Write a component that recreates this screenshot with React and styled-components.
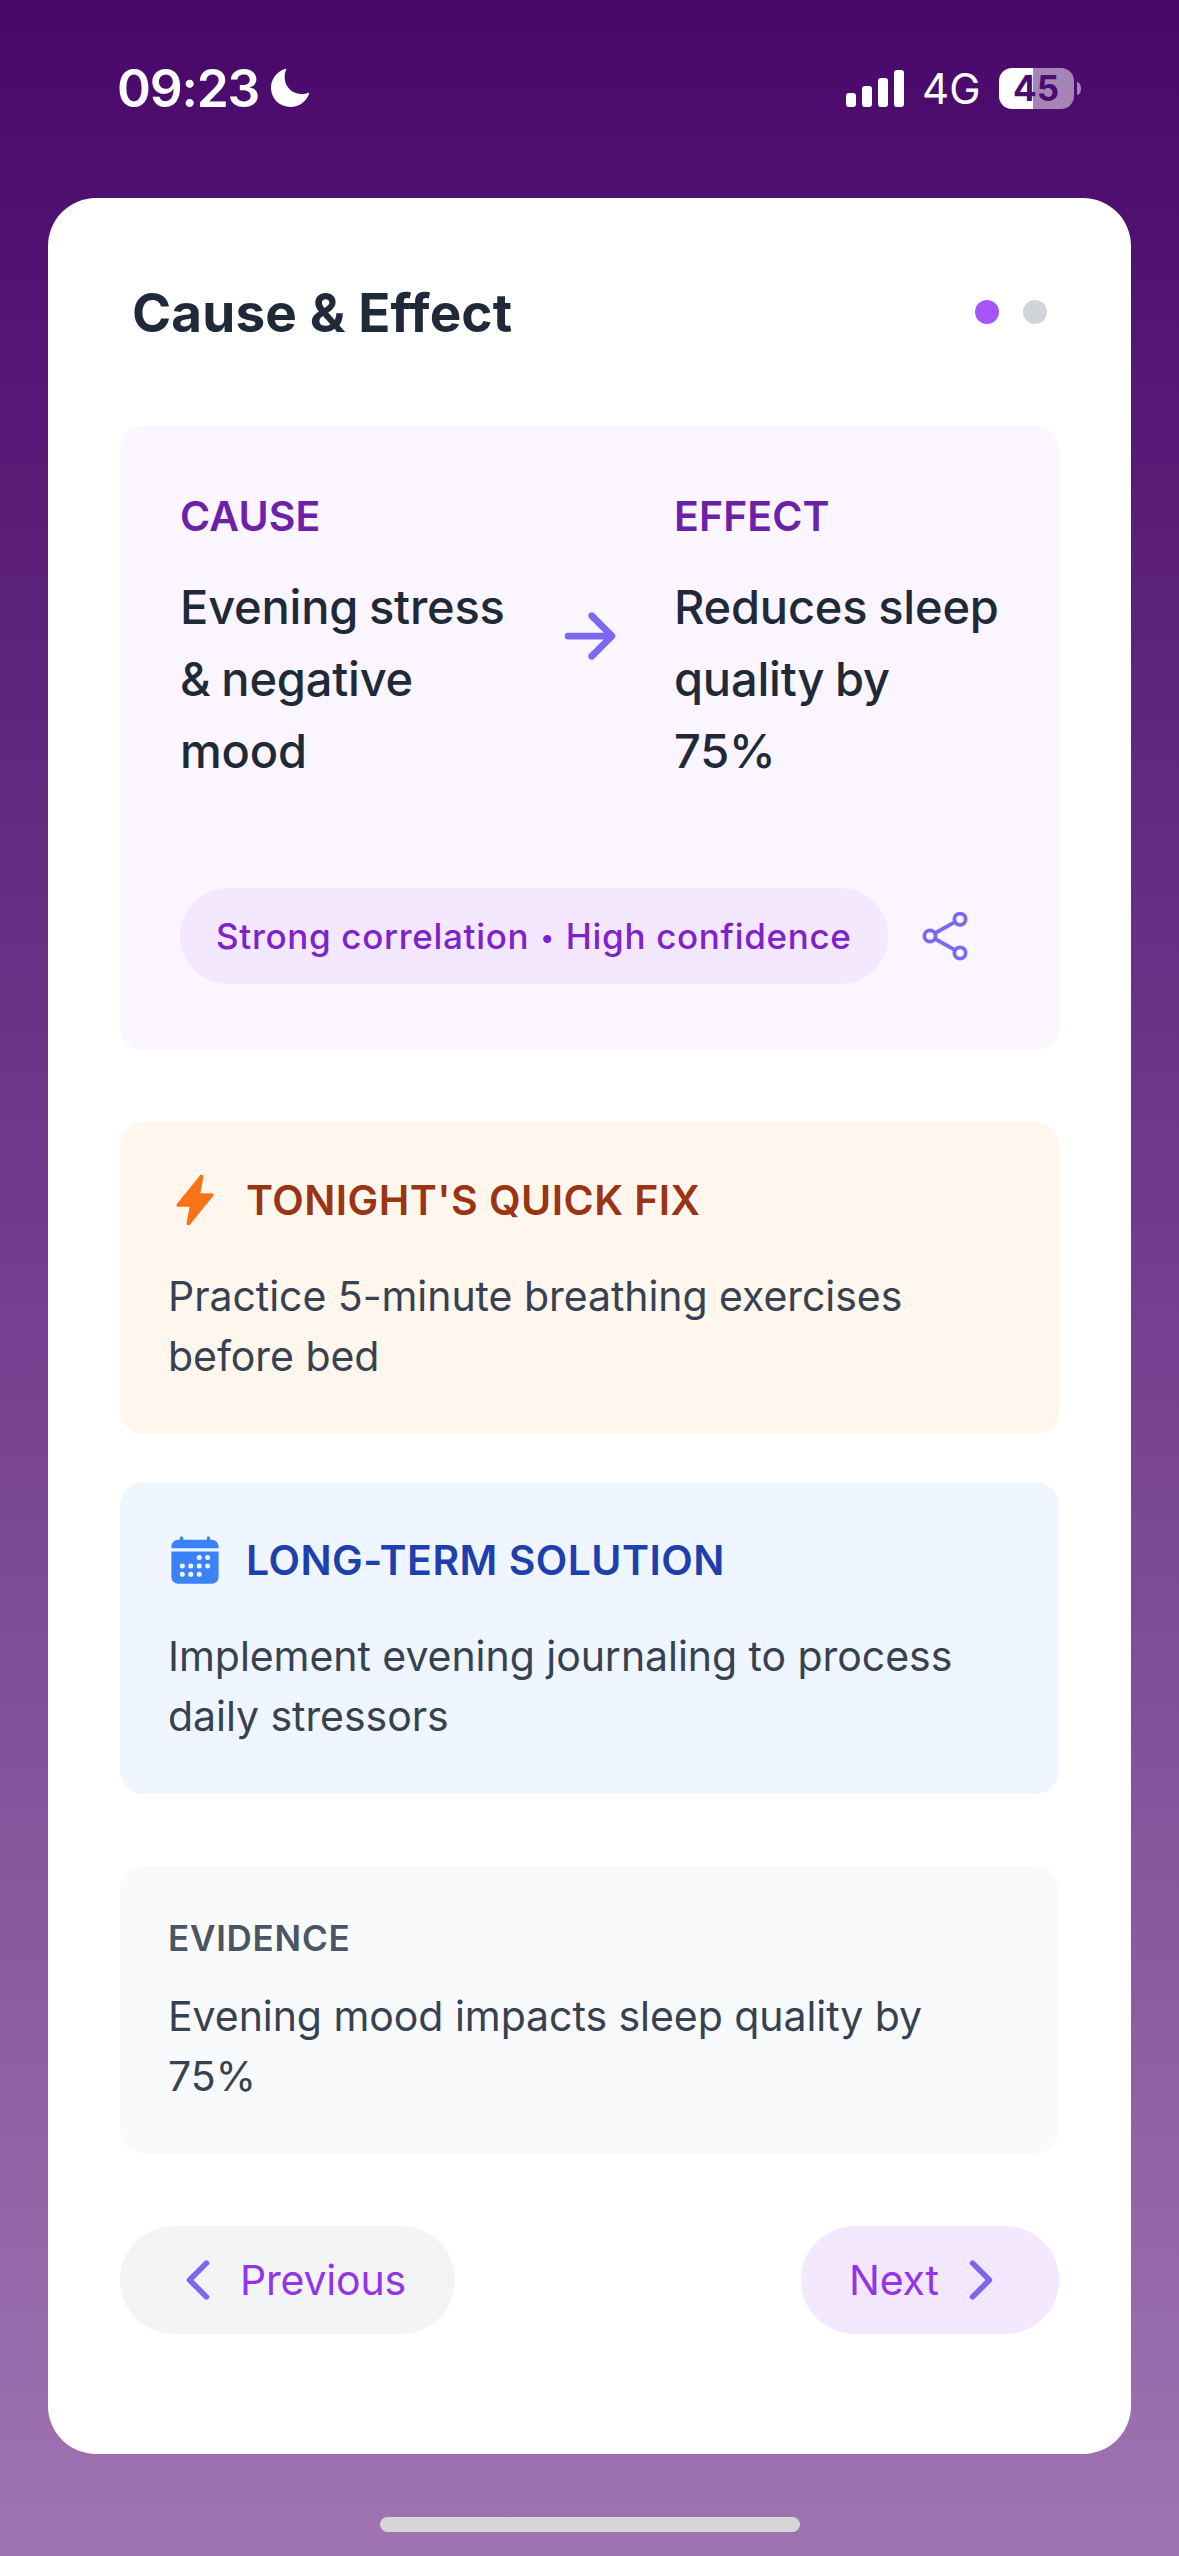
import styled, { createGlobalStyle } from "styled-components";
import {
  IoArrowForward,
  IoCalendar,
  IoChevronBack,
  IoChevronForward,
  IoFlash,
  IoShareSocialOutline,
} from "react-icons/io5";

const tips = [
  {
    title: "TONIGHT'S QUICK FIX",
    text: "Practice 5-minute breathing exercises\nbefore bed",
    icon: IoFlash,
    background: "#fff7ed",
    color: "#9a3412",
    iconColor: "#f97316",
  },
  {
    title: "LONG-TERM SOLUTION",
    text: "Implement evening journaling to process\ndaily stressors",
    icon: IoCalendar,
    background: "#eff6ff",
    color: "#1e40af",
    iconColor: "#3b82f6",
  },
];

function StatusBar() {
  return (
    <Status>
      <Clock>
        <Time>09:23</Time>
        <svg width="40" height="40" viewBox="0 0 40 40">
          <path
            d="M15.2 0.8C16 0.4 16.6 0.9 16.2 1.8C14.8 5 14.4 8 14.8 11.2C15.8 19.4 22 25.4 30.4 25.9C33.4 26.1 35.8 25.7 37.8 24.9C38.8 24.5 39.5 25.1 39.1 26.1C36 34 29 39 20.6 39C9.4 39 1 30.6 1 19.8C1 11 6.8 3.8 15.2 0.8Z"
            fill="#fff"
          />
        </svg>
      </Clock>
      <Signals>
        <Bars>
          <Bar $height={14} />
          <Bar $height={21} />
          <Bar $height={29} />
          <Bar $height={37} />
        </Bars>
        <Network>4G</Network>
        <Battery>45</Battery>
        <BatteryCap />
      </Signals>
    </Status>
  );
}

function App() {
  return (
    <Screen>
      <GlobalStyle />
      <StatusBar />
      <Card>
        <Header>
          <Title>Cause &amp; Effect</Title>
          <Dots>
            <Dot $active />
            <Dot />
          </Dots>
        </Header>

        <Insight>
          <Relation>
            <Column>
              <Label>CAUSE</Label>
              <Statement>{"Evening stress\n& negative\nmood"}</Statement>
            </Column>
            <ArrowBox>
              <IoArrowForward size={72} />
            </ArrowBox>
            <Column>
              <Label>EFFECT</Label>
              <Statement>{"Reduces sleep\nquality by\n75%"}</Statement>
            </Column>
          </Relation>
          <InsightFooter>
            <Pill>
              Strong correlation <Bullet>•</Bullet> High confidence
            </Pill>
            <ShareButton>
              <IoShareSocialOutline size={60} />
            </ShareButton>
          </InsightFooter>
        </Insight>

        <Tips>
          {tips.map((tip) => (
            <Tip key={tip.title} $background={tip.background}>
              <TipHeader $color={tip.iconColor}>
                <tip.icon size={54} />
                <TipTitle $color={tip.color}>{tip.title}</TipTitle>
              </TipHeader>
              <BodyText>{tip.text}</BodyText>
            </Tip>
          ))}
        </Tips>

        <Evidence>
          <EvidenceLabel>EVIDENCE</EvidenceLabel>
          <BodyText>{"Evening mood impacts sleep quality by\n75%"}</BodyText>
        </Evidence>

        <Navigation>
          <NavButton $width={335} $background="#f3f4f6">
            <IoChevronBack size={60} />
            <NavText>Previous</NavText>
          </NavButton>
          <NavButton $width={258} $background="#f3e8ff">
            <NavText>Next</NavText>
            <IoChevronForward size={60} />
          </NavButton>
        </Navigation>
      </Card>
      <HomeIndicator />
    </Screen>
  );
}

export default App;

const GlobalStyle = createGlobalStyle`
  * {
    box-sizing: border-box;
  }

  body {
    margin: 0;
    font-family: Inter, "Liberation Sans", sans-serif;
  }

  svg {
    display: block;
    flex-shrink: 0;
  }
`;

const Screen = styled.div`
  display: flex;
  flex-direction: column;
  align-items: center;
  width: 1179px;
  height: 2556px;
  overflow: hidden;
  background: linear-gradient(to bottom, #48086a, #9f74b1);
`;

const Status = styled.header`
  display: flex;
  justify-content: space-between;
  align-items: center;
  width: 100%;
  height: 198px;
  padding: 0 98px 22px 117px;
  color: white;
`;

const Clock = styled.div`
  display: flex;
  align-items: center;
`;

const Time = styled.span`
  width: 153px;
  font-size: 51.5px;
  font-weight: 600;
  line-height: 60px;
  letter-spacing: -1.2px;
  white-space: nowrap;
`;

const Signals = styled.div`
  display: flex;
  align-items: center;
`;

const Bars = styled.div`
  display: flex;
  align-items: flex-end;
  gap: 6px;
  height: 37px;
`;

const Bar = styled.div`
  width: 10px;
  height: ${({ $height }) => $height}px;
  border-radius: 3px;
  background: white;
`;

const Network = styled.span`
  width: 60px;
  margin: 2px 17px 0 18px;
  font-size: 42px;
  line-height: 50px;
  white-space: nowrap;
`;

const Battery = styled.div`
  width: 75px;
  height: 41px;
  margin-right: 3px;
  padding-right: 1px;
  border-radius: 13px;
  background: linear-gradient(to right, white 45%, #a585b6 45%);
  color: #4a0d6d;
  font-size: 35px;
  font-weight: 700;
  line-height: 41px;
  text-align: center;
`;

const BatteryCap = styled.div`
  width: 4px;
  height: 13px;
  border-radius: 0 4px 4px 0 / 0 7px 7px 0;
  background: #a585b6;
`;

const Card = styled.main`
  width: 1083px;
  height: 2256px;
  padding: 72px;
  border-radius: 48px;
  background: white;
`;

const Header = styled.div`
  display: flex;
  justify-content: space-between;
  align-items: center;
  height: 84px;
  margin-bottom: 72px;
  padding: 0 12px;
`;

const Title = styled.h1`
  margin: 2px 0 0;
  color: #1f2937;
  font-size: 53px;
  font-weight: 700;
  line-height: 84px;
  letter-spacing: 0.15px;
`;

const Dots = styled.div`
  display: flex;
  gap: 24px;
`;

const Dot = styled.span`
  width: 24px;
  height: 24px;
  border-radius: 50%;
  background: ${({ $active }) => ($active ? "#a855f7" : "#d1d5db")};
`;

const Insight = styled.section`
  height: 624px;
  padding: 60px;
  border-radius: 24px;
  background: #faf5ff;
`;

const Relation = styled.div`
  display: flex;
  align-items: center;
  margin-bottom: 95px;
`;

const Column = styled.div`
  flex: 1;
  min-width: 0;
`;

const Label = styled.h2`
  margin: 0 0 25px;
  color: #6b21a8;
  font-size: 41px;
  font-weight: 600;
  line-height: 60px;
  letter-spacing: 0.1px;
`;

const Statement = styled.p`
  margin: 0;
  color: #1f2937;
  font-size: 47px;
  font-weight: 500;
  line-height: 72px;
  letter-spacing: -0.2px;
  word-spacing: -1.5px;
  white-space: pre;
`;

const ArrowBox = styled.div`
  padding: 0 48px 1px 49px;
  color: #7b68ee;
`;

const InsightFooter = styled.div`
  display: flex;
  justify-content: space-between;
  align-items: center;
`;

const Pill = styled.span`
  width: 708px;
  padding: 24px 36px;
  border-radius: 48px;
  background: #f3e8ff;
  color: #7e22ce;
  font-size: 35px;
  font-weight: 500;
  line-height: 48px;
  letter-spacing: 0.68px;
  white-space: nowrap;
`;

const Bullet = styled.span`
  margin: 0 1px;
  font-size: 26px;
  line-height: 1;
  vertical-align: 2px;
`;

const ShareButton = styled.button`
  padding: 24px;
  border: none;
  background: none;
  color: #7b68ee;
`;

const Tips = styled.div`
  display: flex;
  flex-direction: column;
  gap: 48px;
  margin: 72px 0;
`;

const Tip = styled.section`
  padding: 48px;
  border-radius: 24px;
  background: ${({ $background }) => $background};
`;

const TipHeader = styled.div`
  display: flex;
  align-items: center;
  gap: 24px;
  margin-bottom: 36px;
  color: ${({ $color }) => $color};
`;

const TipTitle = styled.h2`
  margin: 0;
  color: ${({ $color }) => $color};
  font-size: 41px;
  font-weight: 600;
  line-height: 60px;
  letter-spacing: 0.45px;
`;

const BodyText = styled.p`
  margin: 0;
  color: #374151;
  font-size: 41px;
  line-height: 60px;
  letter-spacing: -0.05px;
  white-space: pre;
`;

const Evidence = styled.section`
  padding: 48px;
  border-radius: 24px;
  background: #f9fafb;
`;

const EvidenceLabel = styled.h3`
  margin: 0 0 24px;
  color: #4b5563;
  font-size: 35px;
  font-weight: 600;
  line-height: 48px;
  letter-spacing: 0.75px;
`;

const Navigation = styled.nav`
  display: flex;
  justify-content: space-between;
  margin-top: 72px;
`;

const NavButton = styled.button`
  display: flex;
  align-items: center;
  gap: 12px;
  width: ${({ $width }) => $width}px;
  height: 108px;
  padding: 0 48px;
  border: none;
  border-radius: 54px;
  background: ${({ $background }) => $background};
  color: #7b68ee;
  font-family: inherit;
`;

const NavText = styled.span`
  flex: 1;
  color: #9333ea;
  font-size: 41px;
  line-height: 60px;
  letter-spacing: -0.2px;
  text-align: left;
  white-space: nowrap;
`;

const HomeIndicator = styled.div`
  width: 420px;
  height: 15px;
  margin-top: 63px;
  border-radius: 8px;
  background: #d6d6d6;
`;
